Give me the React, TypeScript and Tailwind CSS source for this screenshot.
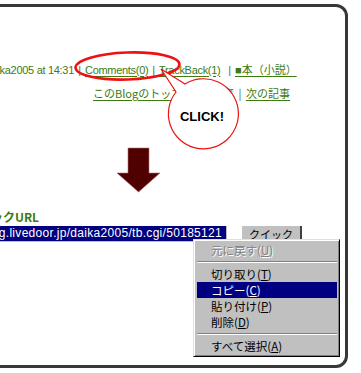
const green = "text-[#3b7b12]";

function Sep() {
  return <span className="w-[11px] text-center text-[#3b7b12]">|</span>;
}

const menuItems = [
  { label: "元に戻す", key: "U", disabled: true },
  { sep: true },
  { label: "切り取り", key: "T" },
  { label: "コピー", key: "C", active: true },
  { label: "貼り付け", key: "P" },
  { label: "削除", key: "D" },
  { sep: true },
  { label: "すべて選択", key: "A" },
];

function ContextMenu() {
  return (
    <div className="absolute left-[193px] top-[239px] w-[147px] h-[118px] bg-[#c0c0c0] border border-t-[#dfdfdf] border-l-[#dfdfdf] border-r-black border-b-black shadow-[inset_1px_1px_0_#fff,inset_-1px_-1px_0_#808080] pt-[2px] pl-[3px] pr-[2px] text-[11.5px] leading-[16px] font-['Noto_Sans_CJK_JP',sans-serif] text-black">
      {menuItems.map((it, i) =>
        it.sep ? (
          <div key={i} className="h-[8px] flex flex-col justify-center">
            <div className="h-px bg-[#808080]" />
            <div className="h-px bg-white" />
          </div>
        ) : (
          <div
            key={i}
            className={`h-[16px] pl-[14px] whitespace-nowrap ${it.active ? "bg-[#000080] text-white" : ""} ${it.disabled ? "text-[#808080] [text-shadow:1px_1px_0_#fff]" : ""}`}
          >
            {it.label}(<span className="underline underline-offset-1">{it.key}</span>)
          </div>
        )
      )}
    </div>
  );
}

export default function App() {
  return (
    <div className="relative w-[361px] h-[373px] overflow-hidden bg-white font-['Noto_Sans_CJK_JP',sans-serif]">
      <div className="ml-[-20px] mt-[4px] w-[368px] h-[364px] border-[3px] border-[#383838] rounded-[12px]">
        {/* line 1 */}
        <div className="mt-[55px] flex items-center h-[16px] text-[11px] whitespace-nowrap font-['Liberation_Sans','Noto_Sans_CJK_JP',sans-serif] tracking-[-0.3px]">
          <div className={`w-[91px] flex justify-end ${green}`}>Posted by daika2005 at 14:31</div>
          <Sep />
          <a className={`w-[63px] underline underline-offset-2 ${green}`}>Comments(0)</a>
          <Sep />
          <a className={`w-[65px] underline underline-offset-2 ${green}`}>TrackBack(1)</a>
          <Sep />
          <a className={`underline underline-offset-2 tracking-normal ${green}`}>■本（小説）</a>
        </div>
        {/* line 2 */}
        <div className="mt-[7px] flex items-center h-[16px] text-[11px] whitespace-nowrap pl-[110px]">
          <a className={`w-[84px] underline underline-offset-2 ${green}`}>このBlogのトップへ</a>
          <Sep />
          <a className={`w-[46px] flex justify-end underline underline-offset-2 ${green}`}>前の記事</a>
          <span className="w-[12px] text-center text-[#3b7b12]">|</span>
          <a className={`underline underline-offset-2 ${green}`}>次の記事</a>
        </div>
        {/* arrow */}
        <svg className="ml-[133px] mt-[46px] block" width="45" height="46" viewBox="116 146 45 46">
          <polygon
            points="128,147 149,147 149,172 160,172 138.5,191 117,172 128,172"
            fill="#500000"
            stroke="#b07070"
            strokeWidth="0.6"
          />
        </svg>
        {/* label */}
        <div className="mt-[17px] w-[56px] flex justify-end whitespace-nowrap text-[12px] leading-[14px] font-bold text-[#3b7b12]">
          トラックバックURL
        </div>
        {/* input row */}
        <div className="mt-[2px] flex items-start">
          <div className="w-[244px] h-[16px] flex justify-end overflow-hidden border-b border-r border-[#c0c0c0] bg-white">
            <span className="h-[15px] bg-[#000080] text-white text-[12px] leading-[15px] tracking-[0.3px] whitespace-nowrap font-['Liberation_Sans',sans-serif] pr-[4px]">
              http://blog.livedoor.jp/daika2005/tb.cgi/50185121
            </span>
          </div>
          <div className="ml-[15px] w-[60px] h-[18px] bg-[#c0c0c0] border-r-2 border-[#404040] text-[11px] leading-[16px] text-center text-black">
            クイック
          </div>
        </div>
      </div>

      {/* overlays: annotation ellipse and speech bubble */}
      <svg className="absolute left-0 top-0" width="361" height="373" viewBox="0 0 361 373">
        <ellipse cx="127.5" cy="66" rx="52" ry="13.5" fill="none" stroke="#ee1111" strokeWidth="2.6" transform="rotate(-2 127.5 66)" />
        <path d="M185 84 L161 69 L176 92 A35 35 0 1 0 185 84 Z" fill="#fff" stroke="#ee1111" strokeWidth="1.2" />
      </svg>
      <div className="absolute left-[167px] top-[108px] w-[70px] text-center text-[13px] leading-[18px] font-bold text-black font-['Liberation_Sans',sans-serif]">
        CLICK!
      </div>

      <ContextMenu />
    </div>
  );
}
